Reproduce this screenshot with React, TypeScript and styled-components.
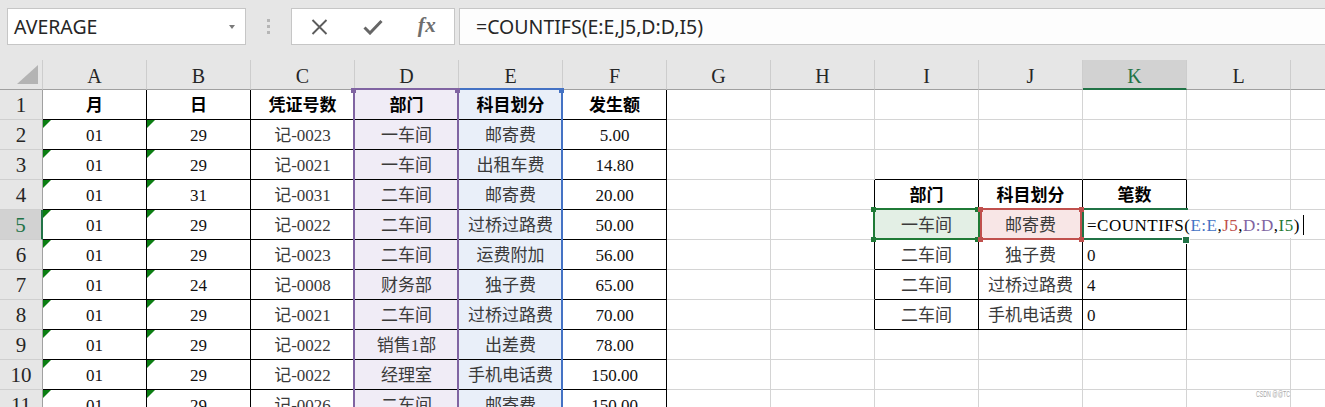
import React from "react";
import styled, { createGlobalStyle } from "styled-components";

const COL_W = 104;
const ROW_H = 30;
const HEAD_W = 43;
const LETTERS = ["A", "B", "C", "D", "E", "F", "G", "H", "I", "J", "K", "L", "M"];
const VISIBLE_LABELS = 12;
const ACTIVE_COL = 11;
const ACTIVE_ROW = 5;
const ROW_COUNT = 11;

const gx = (c: number) => HEAD_W - 1 + COL_W * c;
const gy = (r: number) => ROW_H * r - 1;

const COLORS = {
  grid: "#d4d4d4",
  black: "#000000",
  purple: "#8064a2",
  blue: "#4472c4",
  red: "#c0504d",
  refGreen: "#1f7a36",
  excel: "#217346",
  flag: "#0b7d12",
};

const LEFT_TABLE: string[][] = [
  ["月", "日", "凭证号数", "部门", "科目划分", "发生额"],
  ["01", "29", "记-0023", "一车间", "邮寄费", "5.00"],
  ["01", "29", "记-0021", "一车间", "出租车费", "14.80"],
  ["01", "31", "记-0031", "二车间", "邮寄费", "20.00"],
  ["01", "29", "记-0022", "二车间", "过桥过路费", "50.00"],
  ["01", "29", "记-0023", "二车间", "运费附加", "56.00"],
  ["01", "24", "记-0008", "财务部", "独子费", "65.00"],
  ["01", "29", "记-0021", "二车间", "过桥过路费", "70.00"],
  ["01", "29", "记-0022", "销售1部", "出差费", "78.00"],
  ["01", "29", "记-0022", "经理室", "手机电话费", "150.00"],
  ["01", "29", "记-0026", "二车间", "邮寄费", "150.00"],
];

const RIGHT_TABLE: string[][] = [
  ["部门", "科目划分", "笔数"],
  ["一车间", "邮寄费", ""],
  ["二车间", "独子费", "0"],
  ["二车间", "过桥过路费", "4"],
  ["二车间", "手机电话费", "0"],
];

const inTable = (r: number, c: number) =>
  (r >= 1 && r <= 11 && c >= 1 && c <= 6) || (r >= 4 && r <= 8 && c >= 9 && c <= 11);

const cellText = (r: number, c: number) => {
  if (r >= 1 && r <= 11 && c >= 1 && c <= 6) return LEFT_TABLE[r - 1][c - 1];
  if (r >= 4 && r <= 8 && c >= 9 && c <= 11) return RIGHT_TABLE[r - 4][c - 9];
  return "";
};

const cellFill = (r: number, c: number) => {
  if (r === 5 && c === 9) return "#e3efe5";
  if (r === 5 && c === 10) return "#f8e6e6";
  if (c === 4) return "#f0ecf6";
  if (c === 5) return "#e9eff9";
  return "#ffffff";
};

const GlobalStyle = createGlobalStyle`
  html, body { margin: 0; padding: 0; overflow: hidden; background: #ffffff; }
  * { box-sizing: border-box; }
`;

const Page = styled.div`
  width: 1325px;
  height: 407px;
  overflow: hidden;
  position: relative;
  display: flex;
  flex-direction: column;
  background: #ffffff;
`;

const TopBar = styled.div`
  height: 60px;
  flex: none;
  background: #e6e6e6;
  display: flex;
  align-items: flex-start;
  padding: 8px 0 0 7px;
  font-family: "Noto Sans", "Open Sans", sans-serif;
  font-size: 19.5px;
  color: #262626;
`;

const NameBox = styled.div`
  width: 239px;
  height: 37px;
  flex: none;
  background: #ffffff;
  border: 1px solid #c6c6c6;
  display: flex;
  align-items: center;
  justify-content: space-between;
  padding: 0 10px 0 6px;
  line-height: 1;
`;

const DropArrow = styled.span`
  width: 0;
  height: 0;
  border-left: 3px solid transparent;
  border-right: 3px solid transparent;
  border-top: 4px solid #7a7a7a;
`;

const Grip = styled.div`
  width: 45px;
  height: 37px;
  flex: none;
  display: flex;
  flex-direction: column;
  align-items: center;
  justify-content: center;
  gap: 3px;
`;

const GripDot = styled.span`
  width: 3px;
  height: 3px;
  background: #b6b6b6;
`;

const FxGroup = styled.div`
  width: 164px;
  height: 37px;
  flex: none;
  background: #ffffff;
  border: 1px solid #c6c6c6;
  display: grid;
  grid-template-columns: repeat(3, 54px);
`;

const FxSlot = styled.div`
  display: flex;
  align-items: center;
  justify-content: center;
  color: #6b6b6b;
`;

const FxText = styled.span`
  font-family: "Liberation Serif", serif;
  font-style: italic;
  font-weight: 700;
  font-size: 21px;
  color: #6e6e6e;
  line-height: 1;
  letter-spacing: 0.5px;
  padding-bottom: 2px;
`;

const FormulaBox = styled.div`
  flex: 1;
  height: 37px;
  margin-left: 4px;
  background: #fdfdfd;
  border: 1px solid #c6c6c6;
  border-right: none;
  display: flex;
  align-items: center;
  padding-left: 16px;
  line-height: 1;
`;

const Sheet = styled.div`
  flex: 1;
  position: relative;
  overflow: hidden;
  background: #ffffff;
`;

const Grid = styled.div`
  display: grid;
  grid-template-columns: ${HEAD_W}px repeat(${LETTERS.length}, ${COL_W}px);
`;

const HeaderRow = styled(Grid)`
  height: ${ROW_H}px;
`;

const Corner = styled.div`
  background: #e6e6e6;
  border-right: 1px solid #cdcdcd;
  border-bottom: 1px solid #a0a0a0;
  display: flex;
  align-items: flex-end;
  justify-content: flex-end;
  padding: 0 4px 5px 0;
`;

const ColHeader = styled.div<{ $active?: boolean }>`
  background: ${(p) => (p.$active ? "#d2d2d2" : "#e6e6e6")};
  color: ${(p) => (p.$active ? COLORS.excel : "#262626")};
  border-right: 1px solid #cdcdcd;
  border-bottom: ${(p) => (p.$active ? `2px solid ${COLORS.excel}` : "1px solid #a0a0a0")};
  display: flex;
  align-items: center;
  justify-content: center;
  padding-top: 3px;
  font-family: "Liberation Serif", serif;
  font-size: 20px;
  line-height: 1;
`;

const Body = styled(Grid)`
  position: relative;
  grid-auto-rows: ${ROW_H}px;
`;

const RowHeader = styled.div<{ $active?: boolean }>`
  background: ${(p) => (p.$active ? "#d2d2d2" : "#e6e6e6")};
  color: ${(p) => (p.$active ? COLORS.excel : "#262626")};
  border-right: ${(p) => (p.$active ? `2px solid ${COLORS.excel}` : "1px solid #a0a0a0")};
  border-bottom: 1px solid #cfcfcf;
  display: flex;
  align-items: center;
  justify-content: center;
  padding-top: 1px;
  font-family: "Liberation Serif", serif;
  font-size: 21px;
  line-height: 1;
`;

const Cell = styled.div<{
  $rb: string;
  $bb: string;
  $bg: string;
  $align: "center" | "left";
  $bold?: boolean;
  $soft?: boolean;
  $flag?: boolean;
}>`
  position: relative;
  display: flex;
  align-items: center;
  justify-content: ${(p) => (p.$align === "left" ? "flex-start" : "center")};
  padding: 2px 0 0 ${(p) => (p.$align === "left" ? "4px" : "0")};
  background: ${(p) => p.$bg};
  border-right: 1px solid ${(p) => p.$rb};
  border-bottom: 1px solid ${(p) => p.$bb};
  font-family: "Liberation Serif", "Noto Sans CJK SC", serif;
  font-size: 17px;
  font-weight: ${(p) => (p.$bold ? 700 : 400)};
  color: ${(p) => (p.$bold ? "#000000" : p.$soft ? "#3a3a3a" : "#111111")};
  white-space: nowrap;
  line-height: 1;

  &::before {
    content: "";
    display: ${(p) => (p.$flag ? "block" : "none")};
    position: absolute;
    top: 0;
    left: 0;
    width: 0;
    height: 0;
    border-top: 8px solid ${COLORS.flag};
    border-right: 8px solid transparent;
  }
`;

type BoxProps = { $color: string; $fill?: string };

const RangeBox = styled.div<BoxProps>`
  position: absolute;
  border: 2px solid ${(p) => p.$color};
  background: ${(p) => p.$fill ?? "transparent"};
  pointer-events: none;
`;

const Handle = styled.div<{ $color: string; $size?: number }>`
  position: absolute;
  width: ${(p) => p.$size ?? 5}px;
  height: ${(p) => p.$size ?? 5}px;
  background: ${(p) => p.$color};
`;

const FillHandle = styled(Handle)`
  outline: 1px solid #ffffff;
`;

const Editor = styled.div`
  position: absolute;
  height: 28px;
  background: #ffffff;
  display: flex;
  align-items: center;
  padding: 2px 6px 0 3px;
  font-family: "Liberation Serif", "Noto Sans CJK SC", serif;
  font-size: 17px;
  letter-spacing: 0.5px;
  color: #000000;
  white-space: nowrap;
  line-height: 1;
`;

const Ref = styled.span<{ $color: string }>`
  color: ${(p) => p.$color};
`;

const Caret = styled.span`
  display: inline-block;
  width: 1px;
  height: 20px;
  margin-left: 3px;
  background: #000000;
`;

const Watermark = styled.div`
  position: absolute;
  right: 35px;
  bottom: 9px;
  font-family: "Liberation Sans", sans-serif;
  font-size: 8.5px;
  color: #a8a8a8;
  transform: scaleX(0.62);
  transform-origin: right center;
  white-space: nowrap;
  line-height: 1;
`;

type HandleSpec = { x: number; y: number; color: string };

const handles = (pts: [number, number][], color: string): HandleSpec[] =>
  pts.map(([x, y]) => ({ x, y, color }));

const Formula = () => (
  <>
    =COUNTIFS(<Ref $color={COLORS.blue}>E:E</Ref>,<Ref $color={COLORS.red}>J5</Ref>,
    <Ref $color={COLORS.purple}>D:D</Ref>,<Ref $color={COLORS.refGreen}>I5</Ref>)
  </>
);

export default function App() {
  const rows = Array.from({ length: ROW_COUNT }, (_, i) => i + 1);

  const iTop = gy(ACTIVE_ROW - 1) - 1;
  const columnHandles = [
    ...handles([[gx(3), 0], [gx(4), 0]], COLORS.purple),
    ...handles([[gx(5), 0]], COLORS.blue),
  ];
  const i5Handles = handles(
    [
      [gx(8), iTop + 1],
      [gx(9), iTop + 1],
      [gx(8), iTop + 31],
      [gx(9), iTop + 31],
    ],
    COLORS.refGreen
  );
  const j5Handles = handles(
    [
      [gx(9) + 3, iTop + 1],
      [gx(10), iTop + 1],
      [gx(9) + 3, iTop + 31],
      [gx(10), iTop + 31],
    ],
    COLORS.red
  );

  const renderHandle = (h: HandleSpec, i: number) => (
    <Handle key={i} $color={h.color} style={{ left: h.x - 3, top: h.y - 2 }} />
  );

  return (
    <Page>
      <GlobalStyle />
      <TopBar>
        <NameBox>
          <span>AVERAGE</span>
          <DropArrow />
        </NameBox>
        <Grip>
          <GripDot />
          <GripDot />
          <GripDot />
        </Grip>
        <FxGroup>
          <FxSlot>
            <svg width="17" height="16" viewBox="0 0 17 16">
              <path d="M1.5 1 L15.5 15 M15.5 1 L1.5 15" stroke="#5c5c5c" strokeWidth="1.9" fill="none" />
            </svg>
          </FxSlot>
          <FxSlot>
            <svg width="20" height="16" viewBox="0 0 20 16">
              <path d="M1.5 8.5 L7 14 L18.5 2" stroke="#666666" strokeWidth="3" fill="none" strokeLinejoin="miter" />
            </svg>
          </FxSlot>
          <FxSlot>
            <FxText>fx</FxText>
          </FxSlot>
        </FxGroup>
        <FormulaBox>=COUNTIFS(E:E,J5,D:D,I5)</FormulaBox>
      </TopBar>

      <Sheet>
        <HeaderRow>
          <Corner>
            <svg width="21" height="19" viewBox="0 0 21 19">
              <polygon points="21,0 21,19 0,19" fill="#b4b4b4" />
            </svg>
          </Corner>
          {LETTERS.map((l, i) => (
            <ColHeader key={l} $active={i + 1 === ACTIVE_COL}>
              {i < VISIBLE_LABELS ? l : ""}
            </ColHeader>
          ))}
        </HeaderRow>

        <Body>
          {rows.map((r) => (
            <React.Fragment key={r}>
              <RowHeader $active={r === ACTIVE_ROW}>{r}</RowHeader>
              {LETTERS.map((l, i) => {
                const c = i + 1;
                const rb = inTable(r, c) || inTable(r, c + 1) ? COLORS.black : COLORS.grid;
                const bb = inTable(r, c) || inTable(r + 1, c) ? COLORS.black : COLORS.grid;
                const bold = (r === 1 && c <= 6) || (r === 4 && c >= 9 && c <= 11);
                const soft = [3, 4, 5, 9, 10].includes(c);
                return (
                  <Cell
                    key={l}
                    $rb={rb}
                    $bb={bb}
                    $bg={cellFill(r, c)}
                    $align={c === ACTIVE_COL && r >= 5 ? "left" : "center"}
                    $bold={bold}
                    $soft={soft}
                    $flag={(c === 1 || c === 2) && r >= 2}
                  >
                    {cellText(r, c)}
                  </Cell>
                );
              })}
            </React.Fragment>
          ))}

          <RangeBox $color={COLORS.blue} style={{ left: gx(4) - 1, top: -2, width: 106, height: 400 }} />
          <RangeBox $color={COLORS.purple} style={{ left: gx(3) - 1, top: -2, width: 106, height: 400 }} />
          {columnHandles.map(renderHandle)}

          <RangeBox $color={COLORS.excel} style={{ left: gx(10), top: iTop, width: 106, height: 32 }} />
          <Editor style={{ left: gx(10) + 2, top: iTop + 2 }}>
            <Formula />
            <Caret />
          </Editor>

          <RangeBox $color={COLORS.refGreen} style={{ left: gx(8) - 1, top: iTop, width: 107, height: 32 }} />
          {i5Handles.map(renderHandle)}
          <RangeBox $color={COLORS.red} style={{ left: gx(9) + 2, top: iTop, width: 102, height: 32 }} />
          {j5Handles.map((h, i) => renderHandle(h, i + 10))}

          <FillHandle $color={COLORS.excel} $size={6} style={{ left: gx(11) - 3, top: iTop + 29 }} />
        </Body>
        <Watermark>CSDN @@TC</Watermark>
      </Sheet>
    </Page>
  );
}
